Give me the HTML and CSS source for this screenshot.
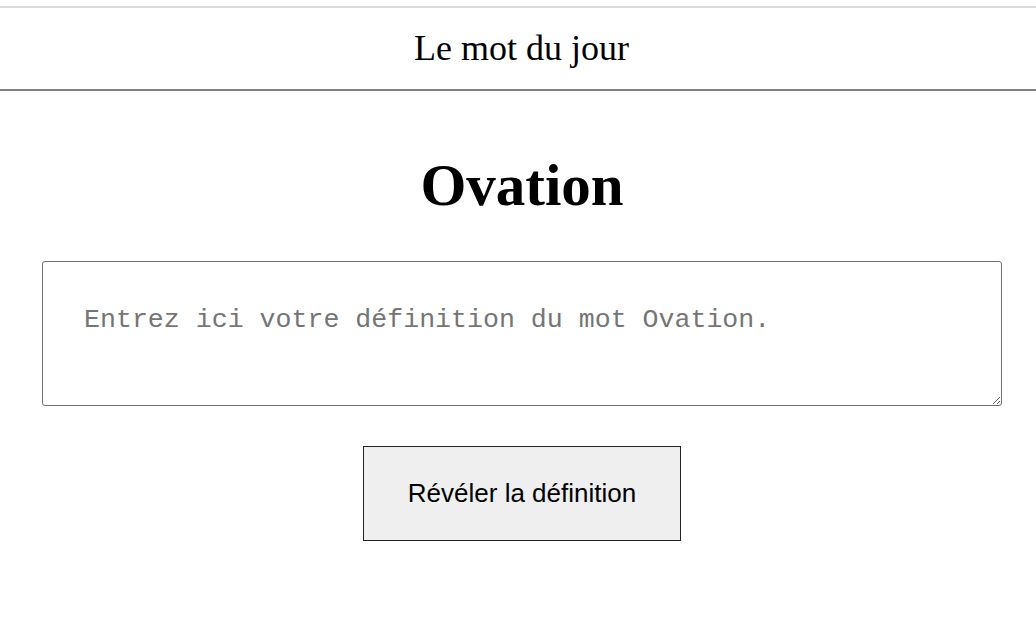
FILE: index.html
```html
<!DOCTYPE html>
<html lang="fr">
<head>
<meta charset="utf-8">
<title>Le mot du jour</title>
<link rel="stylesheet" href="styles.css">
</head>
<body>
<header class="site-header">Le mot du jour</header>
<main class="content">
  <h1 class="word">Ovation</h1>
  <textarea class="definition" placeholder="Entrez ici votre définition du mot Ovation."></textarea>
  <div class="actions">
    <button class="reveal" type="button">Révéler la définition</button>
  </div>
</main>
</body>
</html>
```

FILE: styles.css
```css
html, body {
  margin: 0;
  padding: 0;
  background: #ffffff;
}

body {
  font-family: "Liberation Serif", "Times New Roman", serif;
  color: #000;
}

.site-header {
  margin-top: 6px;
  border-top: 2px solid #dcdcdc;
  border-bottom: 2px solid #808080;
  height: 81px;
  line-height: 81px;
  text-align: center;
  font-size: 36px;
  padding-left: 7px;
}

.content {
  display: flex;
  flex-direction: column;
  align-items: center;
  padding: 0 34px 0 42px;
}

.word {
  margin: 60px 0 41px;
  font-size: 59px;
  font-weight: bold;
}

.definition {
  box-sizing: border-box;
  width: 960px;
  height: 145px;
  border: 1px solid #6f6f6f;
  border-radius: 3px;
  padding: 43px 41px 30px;
  font-family: "Liberation Mono", "Courier New", monospace;
  font-size: 26.6px;
  color: #000;
  resize: both;
}

.definition::placeholder {
  color: #757575;
}

.actions {
  display: flex;
  justify-content: center;
  margin-top: 40px;
}

.reveal {
  box-sizing: border-box;
  width: 318px;
  height: 95px;
  background: #efefef;
  border: 1px solid #222;
  border-radius: 0;
  font-family: "Liberation Sans", Arial, sans-serif;
  font-size: 26px;
  color: #000;
}
```
